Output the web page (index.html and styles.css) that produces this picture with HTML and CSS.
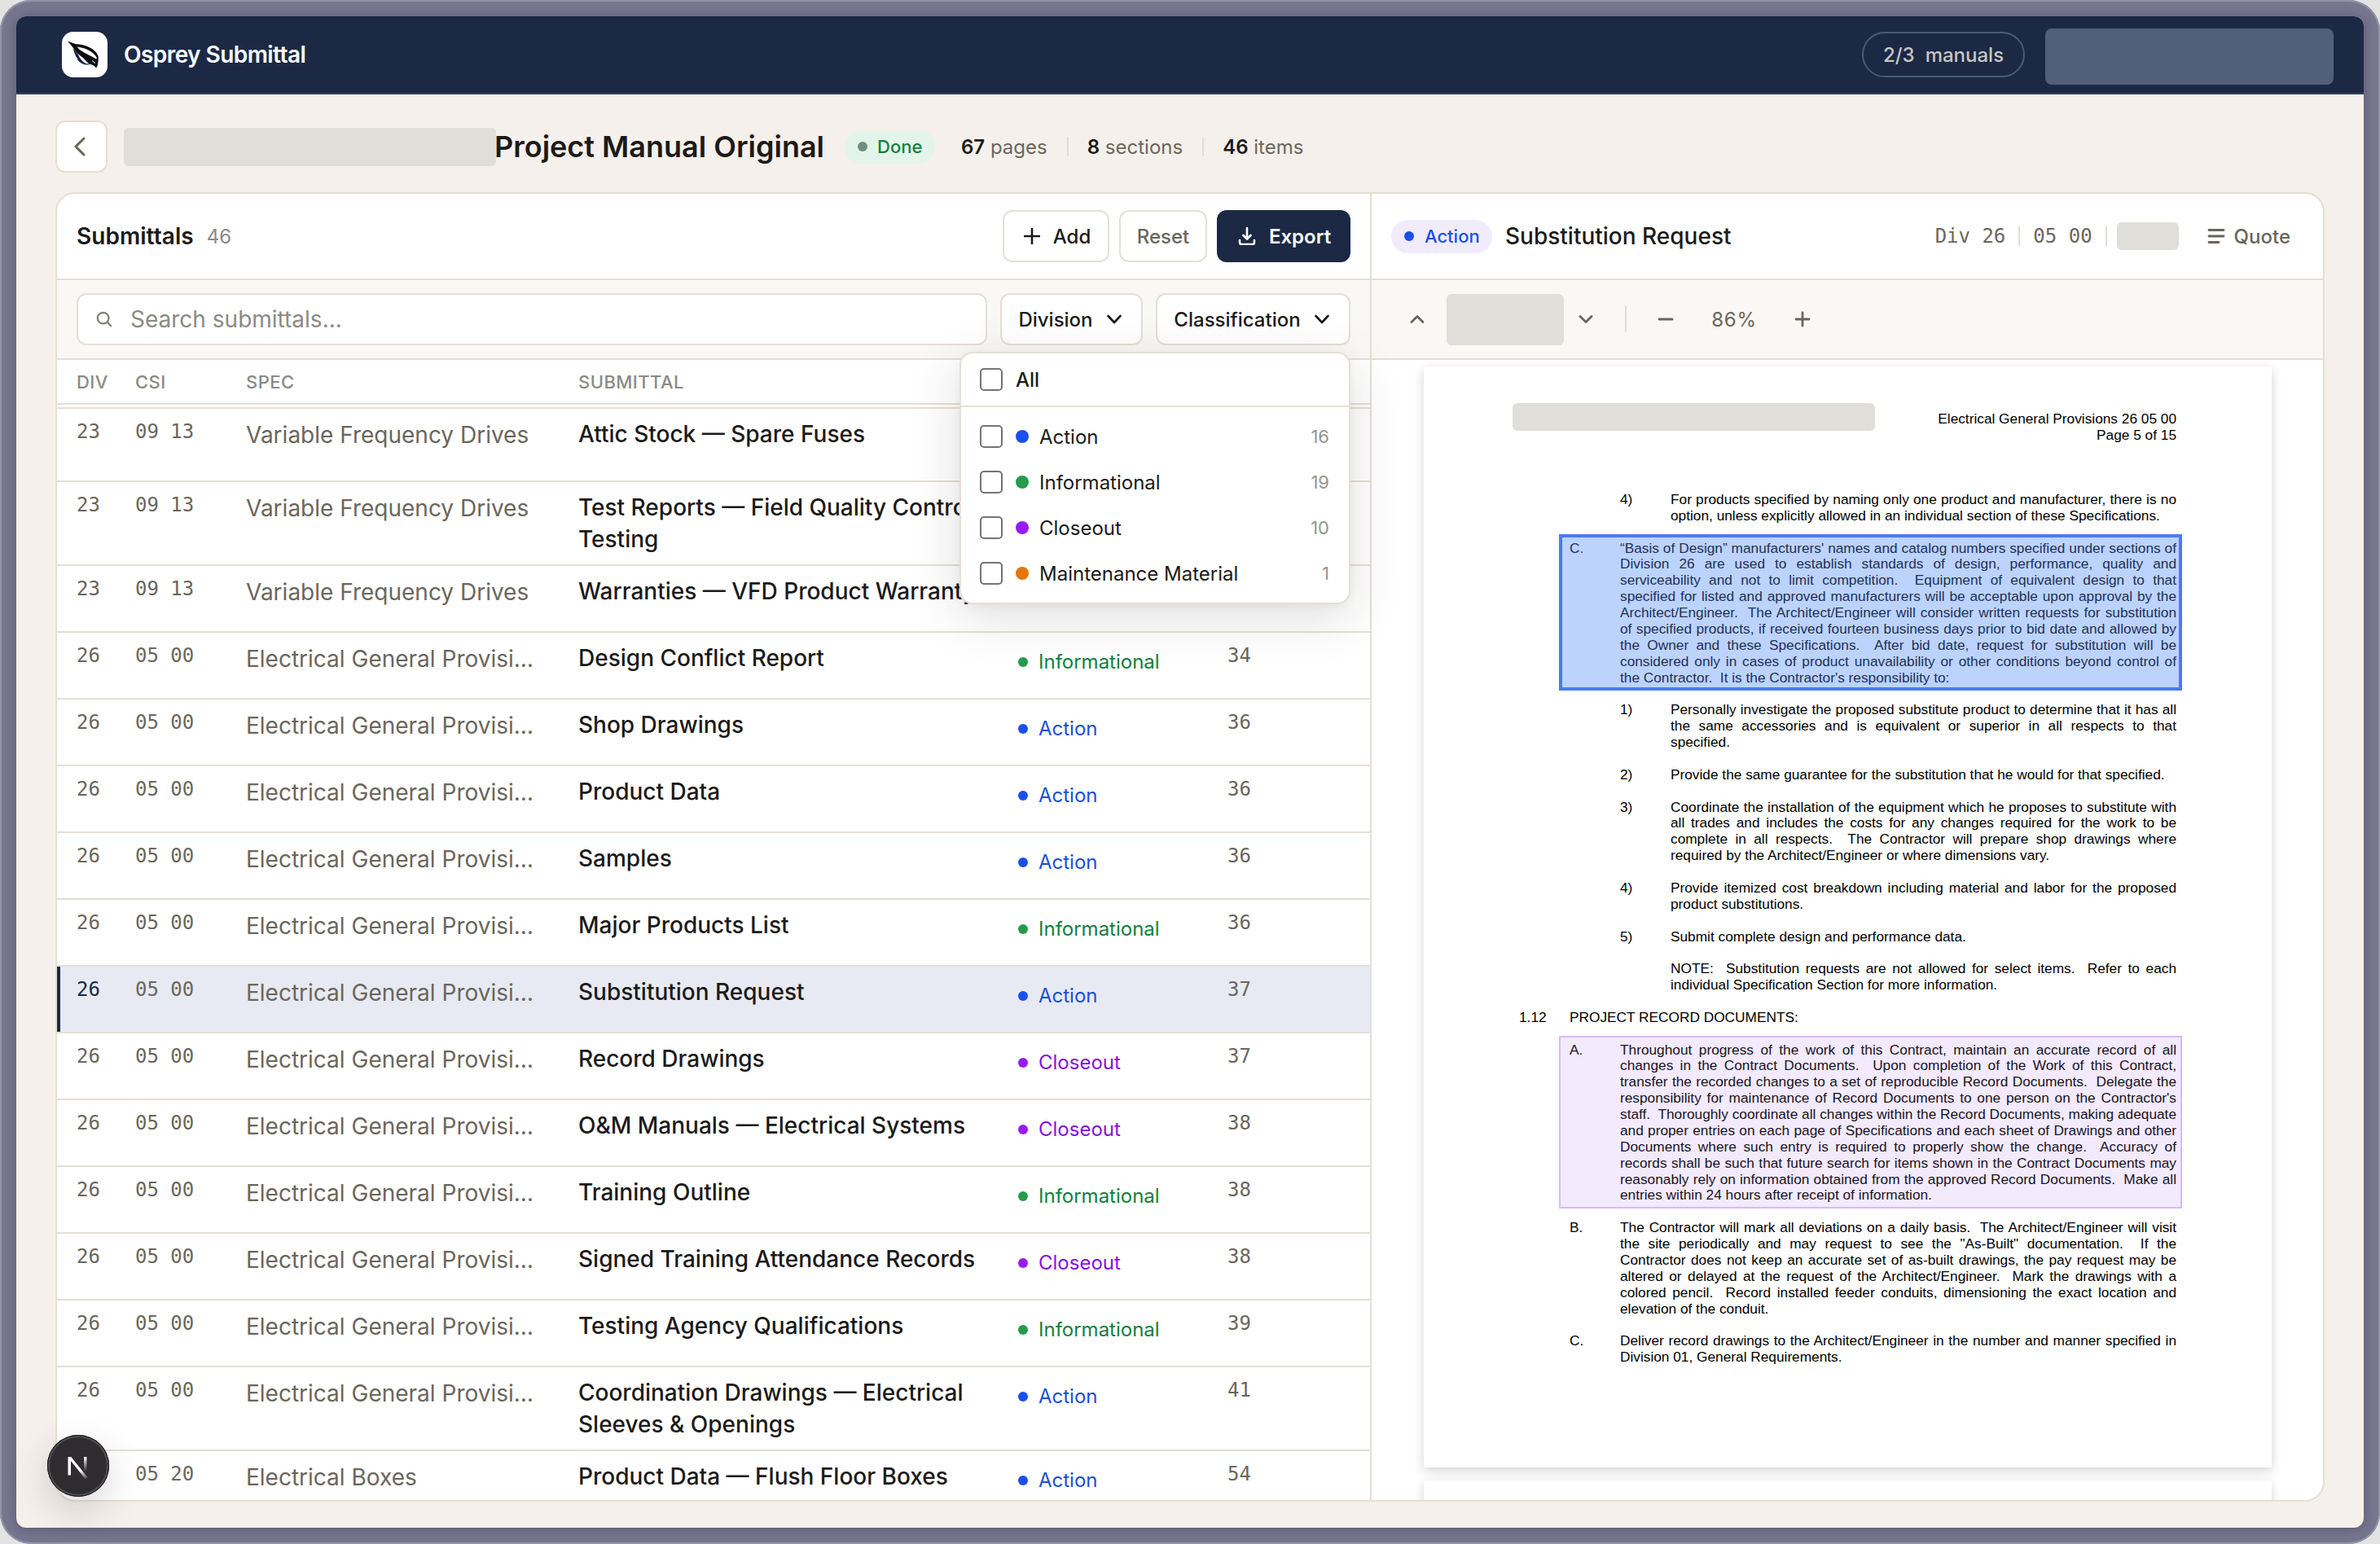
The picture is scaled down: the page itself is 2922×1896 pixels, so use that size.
FILE: index.html
```html
<!DOCTYPE html>
<html lang="en">
<head>
<meta charset="utf-8">
<title>Osprey Submittal</title>
<link rel="stylesheet" href="styles.css">
</head>
<body>
<div class="desktop">
<div class="bezel">
<div class="window">
  <header class="topbar">
    <div class="logo">
      <svg width="56" height="56" viewBox="0 0 56 56">
        <path d="M7 11.500 L18 15.500 C19 19 20 21 24 23.500 C31 28 37 30 43.500 34.500 C45 37 44.600 41 42 44.800 C41 42.500 39.500 41.500 36.500 40.500 C32 38.500 29 36.500 27 33 C24 30 18 27 14.500 20.500 Z" fill="#0b0d12"/>
        <path d="M17 15 C29 16 41 20 44.800 30.500 L44.500 35.500 C42 27 33 20.500 19 18.500 Z" fill="#0b0d12"/>
        <path d="M43.800 30 L44.800 37 L41.500 35 Z" fill="#0b0d12"/>
        <path d="M13.500 19.500 C16 30 20 38.500 31 40 C26 37 22 33.500 20 28 Z" fill="#1b2945"/>
        <path d="M19.500 34 C24 39.500 31 41 38 38.500" fill="none" stroke="#1b2945" stroke-width="1.300"/>
        <path d="M37 35.500 L41 38.500" fill="none" stroke="#fff" stroke-width="1"/>
      </svg>
    </div>
    <span class="brand">Osprey Submittal</span>
    <div class="quota"><span>2/3</span><span>manuals</span></div>
    <div class="account"></div>
  </header>

  <div class="heading">
    <button class="back"><svg width="24" height="24" viewBox="0 0 24 24"><path d="M15 2 L5 12 L15 22"/></svg></button>
    <div class="mask mask-title"></div>
    <h1>Project Manual Original</h1>
    <span class="status"><i></i>Done</span>
    <div class="stats">
      <span><b>67</b> pages</span>
      <span><b>8</b> sections</span>
      <span><b>46</b> items</span>
    </div>
  </div>

  <main class="panel">
    <section class="list">
      <div class="bar list-head">
        <h2>Submittals</h2><span class="count">46</span>
        <div class="actions">
          <button class="btn"><svg width="20" height="20" viewBox="0 0 20 20"><path d="M10 1V19M1 10H19"/></svg>Add</button>
          <button class="btn btn-quiet">Reset</button>
          <button class="btn btn-primary"><svg width="22" height="22" viewBox="0 0 22 22"><path d="M11 1V14M6.500 10L11 14.500L15.500 10M2 16V18.500Q2 21 4.500 21H17.500Q20 21 20 18.500V16"/></svg>Export</button>
        </div>
      </div>
      <div class="toolbar filters">
        <div class="search"><svg width="20" height="20" viewBox="0 0 22 22"><circle cx="9.500" cy="9.500" r="7.500"/><path d="M15 15L20 20"/></svg><span>Search submittals...</span></div>
        <button class="btn select">Division<svg width="20" height="20" viewBox="0 0 20 20"><path d="M2.500 6L10 14L17.500 6"/></svg></button>
        <div class="picker">
          <button class="btn select wide">Classification<svg width="20" height="20" viewBox="0 0 20 20"><path d="M2.500 6L10 14L17.500 6"/></svg></button>
          <div class="menu">
            <div class="menu-all"><i class="box"></i>All</div>
            <div class="menu-items">
              <div class="option"><i class="box"></i><i class="dot blue"></i>Action<em>16</em></div>
              <div class="option"><i class="box"></i><i class="dot green"></i>Informational<em>19</em></div>
              <div class="option"><i class="box"></i><i class="dot purple"></i>Closeout<em>10</em></div>
              <div class="option"><i class="box"></i><i class="dot orange"></i>Maintenance Material<em>1</em></div>
            </div>
          </div>
        </div>
      </div>
      <div class="row columns"><span>DIV</span><span>CSI</span><span>SPEC</span><span>SUBMITTAL</span></div>
      <div class="rows">
        <div class="row first"><span class="mono">23</span><span class="mono">09 13</span><span class="spec">Variable Frequency Drives</span><span class="name">Attic Stock — Spare Fuses</span></div>
        <div class="row two"><span class="mono">23</span><span class="mono">09 13</span><span class="spec">Variable Frequency Drives</span><span class="name">Test Reports — Field Quality Control<br>Testing</span></div>
        <div class="row"><span class="mono">23</span><span class="mono">09 13</span><span class="spec">Variable Frequency Drives</span><span class="name">Warranties — VFD Product Warranty</span></div>
        <div class="row"><span class="mono">26</span><span class="mono">05 00</span><span class="spec">Electrical General Provisi…</span><span class="name">Design Conflict Report</span><span class="kind info">Informational</span><span class="mono">34</span></div>
        <div class="row"><span class="mono">26</span><span class="mono">05 00</span><span class="spec">Electrical General Provisi…</span><span class="name">Shop Drawings</span><span class="kind action">Action</span><span class="mono">36</span></div>
        <div class="row"><span class="mono">26</span><span class="mono">05 00</span><span class="spec">Electrical General Provisi…</span><span class="name">Product Data</span><span class="kind action">Action</span><span class="mono">36</span></div>
        <div class="row"><span class="mono">26</span><span class="mono">05 00</span><span class="spec">Electrical General Provisi…</span><span class="name">Samples</span><span class="kind action">Action</span><span class="mono">36</span></div>
        <div class="row"><span class="mono">26</span><span class="mono">05 00</span><span class="spec">Electrical General Provisi…</span><span class="name">Major Products List</span><span class="kind info">Informational</span><span class="mono">36</span></div>
        <div class="row selected"><span class="mono">26</span><span class="mono">05 00</span><span class="spec">Electrical General Provisi…</span><span class="name">Substitution Request</span><span class="kind action">Action</span><span class="mono">37</span></div>
        <div class="row"><span class="mono">26</span><span class="mono">05 00</span><span class="spec">Electrical General Provisi…</span><span class="name">Record Drawings</span><span class="kind close">Closeout</span><span class="mono">37</span></div>
        <div class="row"><span class="mono">26</span><span class="mono">05 00</span><span class="spec">Electrical General Provisi…</span><span class="name">O&amp;M Manuals — Electrical Systems</span><span class="kind close">Closeout</span><span class="mono">38</span></div>
        <div class="row"><span class="mono">26</span><span class="mono">05 00</span><span class="spec">Electrical General Provisi…</span><span class="name">Training Outline</span><span class="kind info">Informational</span><span class="mono">38</span></div>
        <div class="row"><span class="mono">26</span><span class="mono">05 00</span><span class="spec">Electrical General Provisi…</span><span class="name">Signed Training Attendance Records</span><span class="kind close">Closeout</span><span class="mono">38</span></div>
        <div class="row"><span class="mono">26</span><span class="mono">05 00</span><span class="spec">Electrical General Provisi…</span><span class="name">Testing Agency Qualifications</span><span class="kind info">Informational</span><span class="mono">39</span></div>
        <div class="row two"><span class="mono">26</span><span class="mono">05 00</span><span class="spec">Electrical General Provisi…</span><span class="name">Coordination Drawings — Electrical<br>Sleeves &amp; Openings</span><span class="kind action">Action</span><span class="mono">41</span></div>
        <div class="row last"><span class="mono"></span><span class="mono">05 20</span><span class="spec">Electrical Boxes</span><span class="name">Product Data — Flush Floor Boxes</span><span class="kind action">Action</span><span class="mono">54</span></div>
      </div>
    </section>

    <section class="preview">
      <div class="bar preview-head">
        <span class="tag"><i></i>Action</span>
        <h3>Substitution Request</h3>
        <div class="ref">
          <span>Div 26</span><u></u><span>05 00</span><u></u><div class="mask mask-page"></div>
        </div>
        <span class="quote"><svg width="22" height="20" viewBox="0 0 22 20"><path d="M2 2.500H20M2 10H20M2 17.500H14"/></svg>Quote</span>
      </div>
      <div class="toolbar pager">
        <svg class="up" width="20" height="20" viewBox="0 0 20 20"><path d="M3 13.500L10 6.500L17 13.500"/></svg>
        <div class="mask mask-nav"></div>
        <svg class="down" width="20" height="20" viewBox="0 0 20 20"><path d="M3 6.500L10 13.500L17 6.500"/></svg>
        <u></u>
        <svg class="minus" width="20" height="20" viewBox="0 0 20 20"><path d="M2 10H18"/></svg>
        <span class="zoom">86%</span>
        <svg class="plus" width="20" height="20" viewBox="0 0 20 20"><path d="M2 10H18M10 2V18"/></svg>
      </div>
      <div class="viewer">
        <article class="page">
          <div class="page-head">
            <div class="mask mask-head"></div>
            <div class="page-ref">Electrical General Provisions 26 05 00<br>Page 5 of 15</div>
          </div>
          <div class="clause d2"><b>4)</b><p><span>For products specified by naming only one product and manufacturer, there is no</span><span>option, unless explicitly allowed in an individual section of these Specifications.</span></p></div>
          <div class="clause d1 mark-blue"><b>C.</b><p><span>“Basis of Design” manufacturers' names and catalog numbers specified under sections of</span><span>Division 26 are used to establish standards of design, performance, quality and</span><span>serviceability and not to limit competition.&nbsp; Equipment of equivalent design to that</span><span>specified for listed and approved manufacturers will be acceptable upon approval by the</span><span>Architect/Engineer.&nbsp; The Architect/Engineer will consider written requests for substitution</span><span>of specified products, if received fourteen business days prior to bid date and allowed by</span><span>the Owner and these Specifications.&nbsp; After bid date, request for substitution will be</span><span>considered only in cases of product unavailability or other conditions beyond control of</span><span>the Contractor.&nbsp; It is the Contractor's responsibility to:</span></p></div>
          <div class="clause d2"><b>1)</b><p><span>Personally investigate the proposed substitute product to determine that it has all</span><span>the same accessories and is equivalent or superior in all respects to that</span><span>specified.</span></p></div>
          <div class="clause d2"><b>2)</b><p><span>Provide the same guarantee for the substitution that he would for that specified.</span></p></div>
          <div class="clause d2"><b>3)</b><p><span>Coordinate the installation of the equipment which he proposes to substitute with</span><span>all trades and includes the costs for any changes required for the work to be</span><span>complete in all respects.&nbsp; The Contractor will prepare shop drawings where</span><span>required by the Architect/Engineer or where dimensions vary.</span></p></div>
          <div class="clause d2"><b>4)</b><p><span>Provide itemized cost breakdown including material and labor for the proposed</span><span>product substitutions.</span></p></div>
          <div class="clause d2"><b>5)</b><p><span>Submit complete design and performance data.</span></p></div>
          <div class="clause d2"><b></b><p><span>NOTE:&nbsp; Substitution requests are not allowed for select items.&nbsp; Refer to each</span><span>individual Specification Section for more information.</span></p></div>
          <div class="clause d0"><b>1.12</b><p><span>PROJECT RECORD DOCUMENTS:</span></p></div>
          <div class="clause d1 mark-purple"><b>A.</b><p><span>Throughout progress of the work of this Contract, maintain an accurate record of all</span><span>changes in the Contract Documents.&nbsp; Upon completion of the Work of this Contract,</span><span>transfer the recorded changes to a set of reproducible Record Documents.&nbsp; Delegate the</span><span>responsibility for maintenance of Record Documents to one person on the Contractor's</span><span>staff.&nbsp; Thoroughly coordinate all changes within the Record Documents, making adequate</span><span>and proper entries on each page of Specifications and each sheet of Drawings and other</span><span>Documents where such entry is required to properly show the change.&nbsp; Accuracy of</span><span>records shall be such that future search for items shown in the Contract Documents may</span><span>reasonably rely on information obtained from the approved Record Documents.&nbsp; Make all</span><span>entries within 24 hours after receipt of information.</span></p></div>
          <div class="clause d1"><b>B.</b><p><span>The Contractor will mark all deviations on a daily basis.&nbsp; The Architect/Engineer will visit</span><span>the site periodically and may request to see the "As-Built" documentation.&nbsp; If the</span><span>Contractor does not keep an accurate set of as-built drawings, the pay request may be</span><span>altered or delayed at the request of the Architect/Engineer.&nbsp; Mark the drawings with a</span><span>colored pencil.&nbsp; Record installed feeder conduits, dimensioning the exact location and</span><span>elevation of the conduit.</span></p></div>
          <div class="clause d1"><b>C.</b><p><span>Deliver record drawings to the Architect/Engineer in the number and manner specified in</span><span>Division 01, General Requirements.</span></p></div>
        </article>
        <article class="page next"></article>
      </div>
    </section>
  </main>

  <div class="devtool">
    <svg width="76" height="76" viewBox="0 0 76 76">
      <defs>
        <linearGradient id="diag" x1="26" y1="27" x2="50" y2="55" gradientUnits="userSpaceOnUse"><stop offset="0.600" stop-color="#fff"/><stop offset="1" stop-color="#fff" stop-opacity="0"/></linearGradient>
        <linearGradient id="stem" x1="0" y1="27" x2="0" y2="45" gradientUnits="userSpaceOnUse"><stop offset="0" stop-color="#fff"/><stop offset="1" stop-color="#fff" stop-opacity="0"/></linearGradient>
      </defs>
      <path d="M25.500 27H29.200L49.500 52L46.800 54.200L29 32V49.500H25.500Z" fill="url(#diag)"/>
      <path d="M45 27H48.500V46H45Z" fill="url(#stem)"/>
    </svg>
  </div>
</div>
</div>
</div>
</body>
</html>
```

FILE: styles.css
```css
* { box-sizing: border-box; }

body {
  margin: 0;
  background: #e3e3e3;
  font-family: Inter, "Liberation Sans", sans-serif;
  color: #1c1a19;
}

h1, h2, h3, p { margin: 0; }
i, em { font-style: normal; }
u { text-decoration: none; }
svg { display: block; flex: none; fill: none; }
button { font: inherit; color: inherit; margin: 0; }

.desktop { width: 2922px; height: 1896px; overflow: hidden; }

.bezel {
  width: 100%;
  height: 100%;
  padding: 20px;
  background: #78768f;
  border-radius: 38px;
  box-shadow: inset 0 0 0 2px #9694a8;
  overflow: hidden;
}

.window {
  position: relative;
  width: 2882px;
  height: 1856px;
  background: #f5f0eb;
  border-radius: 12px;
  box-shadow: 0 2px 14px rgba(40, 36, 60, 0.35);
  display: flex;
  flex-direction: column;
}

/* Top bar */
.topbar {
  height: 96px;
  flex: none;
  display: flex;
  align-items: center;
  padding: 0 37px 0 56px;
  background: #1b2945;
  border-bottom: 2px solid #354361;
  border-radius: 12px 12px 0 0;
}
.logo { width: 56px; height: 56px; background: #fff; border-radius: 14px; }
.brand { margin-left: 20px; font-size: 28px; font-weight: 600; color: #fff; letter-spacing: -0.560px; }
.quota {
  margin-left: auto;
  width: 200px;
  height: 56px;
  display: flex;
  align-items: center;
  justify-content: center;
  gap: 13px;
  border: 2px solid #4c5972;
  border-radius: 28px;
  font-size: 24px;
  font-weight: 500;
  color: #c9c7c3;
}
.account { width: 354px; height: 69px; margin: 4px 0 0 25px; background: #525f7b; border-radius: 8px; }

/* Page heading */
.heading { height: 120px; flex: none; display: flex; align-items: center; padding: 8px 48px 0; }
.back {
  width: 64px;
  height: 64px;
  display: flex;
  align-items: center;
  justify-content: center;
  background: #fff;
  border: 2px solid #e5dfd4;
  border-radius: 12px;
}
.back svg { stroke: #6b6459; stroke-width: 3; stroke-linecap: round; stroke-linejoin: round; }
.mask { background: #dfded8; border-radius: 6px; }
.mask-title { width: 457px; height: 47px; margin-left: 20px; }
h1 { margin-left: -2px; font-size: 36px; font-weight: 600; }
.status {
  margin-left: 25px;
  width: 111px;
  height: 41px;
  display: flex;
  align-items: center;
  padding-left: 16px;
  gap: 12px;
  border-radius: 21px;
  background: #e3f4eb;
  color: #12803c;
  font-size: 22px;
  font-weight: 500;
}
.status i { width: 12px; height: 12px; border-radius: 50%; background: #6f8f7d; }
.stats { display: flex; margin-left: 32px; font-size: 24px; color: #6b665c; }
.stats span + span { margin-left: 24px; padding-left: 25px; background: linear-gradient(#e3ddd2, #e3ddd2) 0 50% / 2px 24px no-repeat; }
.stats b { font-weight: 600; color: #1c1a19; }

/* Main panel */
.panel {
  margin-left: 48px;
  width: 2786px;
  height: 1608px;
  flex: none;
  display: flex;
  background: #fff;
  border: 2px solid #e5dfd4;
  border-radius: 24px;
  overflow: hidden;
}
.list { position: relative; z-index: 1; width: 1614px; flex: none; border-right: 2px solid #e5dfd4; display: flex; flex-direction: column; }
.preview { flex: 1; display: flex; flex-direction: column; }
.bar { height: 106px; flex: none; display: flex; align-items: center; border-bottom: 2px solid #e5dfd4; }
.toolbar { height: 98px; flex: none; display: flex; align-items: center; background: #f9f8f5; border-bottom: 2px solid #e5dfd4; }
.list-head, .filters { padding: 0 24px; }
h2 { font-size: 28px; font-weight: 600; letter-spacing: 0.050px; }
.count { margin-left: 16px; font-size: 24px; color: #8c8a84; }
.actions { display: flex; gap: 12px; margin-left: auto; }
.btn {
  height: 64px;
  display: flex;
  align-items: center;
  justify-content: center;
  background: #fff;
  border: 2px solid #e5dfd4;
  border-radius: 12px;
  padding: 0;
  font-size: 24px;
  font-weight: 500;
}
.btn svg { stroke: currentColor; stroke-width: 2.600; stroke-linecap: round; stroke-linejoin: round; }
.actions .btn:first-child { width: 131px; gap: 16px; padding-left: 3px; }
.btn.btn-quiet { width: 108px; color: #6b665c; }
.btn.btn-primary { width: 164px; gap: 16px; padding-left: 2px; background: #1b2945; border-color: #1b2945; color: #fff; font-weight: 600; }
.search {
  width: 1118px;
  height: 64px;
  display: flex;
  align-items: center;
  gap: 22px;
  padding-left: 22px;
  background: #fff;
  border: 2px solid #e5dfd4;
  border-radius: 12px;
  font-size: 28px;
  color: #8c8a84;
}
.search svg { stroke: #858178; stroke-width: 2.500; stroke-linecap: round; }
.btn.select { width: 175px; margin-left: 16px; gap: 16px; padding-right: 3px; }
.picker { position: relative; margin-left: 16px; }
.btn.select.wide { width: 239px; margin-left: 0; }

/* Classification menu */
.menu {
  position: absolute;
  right: 0;
  top: 72px;
  width: 480px;
  height: 310px;
  background: #fff;
  border: 2px solid #e5dfd4;
  border-radius: 16px;
  box-shadow: 0 16px 64px rgba(28, 26, 25, 0.14), 0 4px 12px rgba(28, 26, 25, 0.04);
  font-size: 24px;
}
.menu-all { height: 66px; display: flex; align-items: center; gap: 16px; padding-left: 23px; border-bottom: 2px solid #e5dfd4; font-weight: 500; }
.menu-items { padding: 8px 24px 8px 23px; }
.option { height: 56px; display: flex; align-items: center; }
.box { width: 28px; height: 28px; border: 2px solid #767472; border-radius: 5px; background: #fff; }
.dot { width: 16px; height: 16px; margin: 0 13px 0 16px; border-radius: 50%; }
.option em { margin-left: auto; font-size: 22px; color: #96948f; }
.blue { background: #1a4fee; }
.green { background: #259b4c; }
.purple { background: #981bf5; }
.orange { background: #e5760c; }

/* Submittal table */
.row {
  display: grid;
  grid-template-columns: 72px 136px 408px 540px 257px 1fr;
  align-items: start;
  height: 82px;
  flex: none;
  padding: 12px 0 0 24px;
  border-bottom: 2px solid #e5dfd4;
  white-space: nowrap;
}
.columns { height: 55px; align-items: center; padding-top: 0; font-size: 22px; font-weight: 500; letter-spacing: 0.450px; color: #8c8a84; }
.rows { margin-top: 3px; border-top: 2px solid #e5dfd4; flex: 1; min-height: 0; overflow: hidden; }
.first { height: 90px; }
.two { height: 103px; }
.last { border-bottom: 0; }
.selected { background: #e7eaf3; box-shadow: inset 4px 0 0 #1b2945; }
.mono { font-family: "DejaVu Sans Mono", monospace; font-size: 24px; line-height: 32px; color: #6b665c; }
.selected .mono:first-child { color: #1b2945; }
.spec { font-size: 28px; line-height: 41px; color: #6b665c; }
.name { font-size: 28px; line-height: 39px; font-weight: 500; }
.kind { display: flex; align-items: center; gap: 13px; padding-top: 4px; font-size: 24px; line-height: 39px; }
.kind::before { content: ""; width: 12px; height: 12px; border-radius: 50%; }
.info { color: #12803c; }
.info::before { background: #259b4c; }
.action { color: #1a4fd8; }
.action::before { background: #1a4fee; }
.close { color: #8512dd; }
.close::before { background: #981bf5; }

/* Preview header and pager */
.preview-head { padding: 0 40px 0 24px; }
.tag {
  width: 124px;
  height: 41px;
  display: flex;
  align-items: center;
  gap: 13px;
  padding-left: 16px;
  background: #f1ecfc;
  border-radius: 21px;
  color: #1a4fee;
  font-size: 22px;
  font-weight: 500;
}
.tag i { width: 12px; height: 12px; border-radius: 50%; background: #1a4fee; }
h3 { margin-left: 16px; font-size: 28px; font-weight: 500; }
.ref { margin-left: auto; display: flex; align-items: center; font-family: "DejaVu Sans Mono", monospace; font-size: 24px; color: #6b665c; }
.ref u, .pager u { width: 2px; height: 24px; background: #e3ddd2; margin: 0 16px; }
.ref u:last-of-type { margin-right: 12px; }
.mask-page { width: 76px; height: 34px; }
.quote { display: flex; align-items: center; gap: 11px; margin-left: 35px; color: #6b665c; font-size: 24px; font-weight: 500; }
.quote svg, .pager svg { stroke: #6b6459; stroke-width: 2.800; stroke-linecap: round; stroke-linejoin: round; }
.pager { padding-left: 46px; }
.mask-nav { width: 144px; height: 63px; margin: 0 17px 0 26px; }
.pager u { height: 32px; margin: 0 38px; }
.zoom { width: 100px; margin: 0 24px; text-align: center; font-size: 24px; letter-spacing: 0.800px; color: #6b665c; }

/* Document */
.viewer { flex: 1; min-height: 0; overflow: hidden; padding: 8px 0 0 64px; }
.page {
  width: 1041px;
  height: 1352px;
  padding: 45px 117px 0 117px;
  background: #fff;
  box-shadow: 0 4px 12px rgba(0, 0, 0, 0.18);
  font-family: "Liberation Sans", Arial, sans-serif;
  font-size: 17.280px;
  line-height: 19.870px;
  color: #000;
}
.page.next { margin-top: 16px; }
.page-head { display: flex; justify-content: space-between; height: 109px; }
.mask-head { width: 445px; height: 34px; margin-left: -8px; }
.page-ref { padding-top: 10px; text-align: right; }
.clause { display: grid; grid-template-columns: 62px 1fr; margin-bottom: 19.870px; white-space: nowrap; }
.clause b { font-weight: 400; }
.clause span { display: block; text-align: justify; text-align-last: justify; }
.clause span:last-child { text-align-last: left; }
.d1 { margin-left: 62px; }
.d2 { margin-left: 124px; }
.mark-blue, .mark-purple { position: relative; }
.mark-blue { color: #1f3157; }
.mark-blue b, .mark-blue p, .mark-purple b, .mark-purple p { position: relative; z-index: 1; }
.mark-blue::before, .mark-purple::before { content: ""; position: absolute; inset: -8px -7px -6px -13px; }
.mark-blue::before { background: #bcd3fe; border: 4px solid #4a7cf0; }
.mark-purple { color: #181422; }
.mark-purple::before { background: #f3eafe; border: 2px solid #d9b9fa; }

/* Floating framework badge */
.devtool {
  position: absolute;
  z-index: 5;
  left: 38px;
  top: 1742px;
  width: 76px;
  height: 76px;
  border-radius: 50%;
  background: #2f2c2f;
  box-shadow: inset 0 0 0 1px #171517, inset 0 0 0 3px #514e51, 0 16px 48px rgba(0, 0, 0, 0.16);
}
```
